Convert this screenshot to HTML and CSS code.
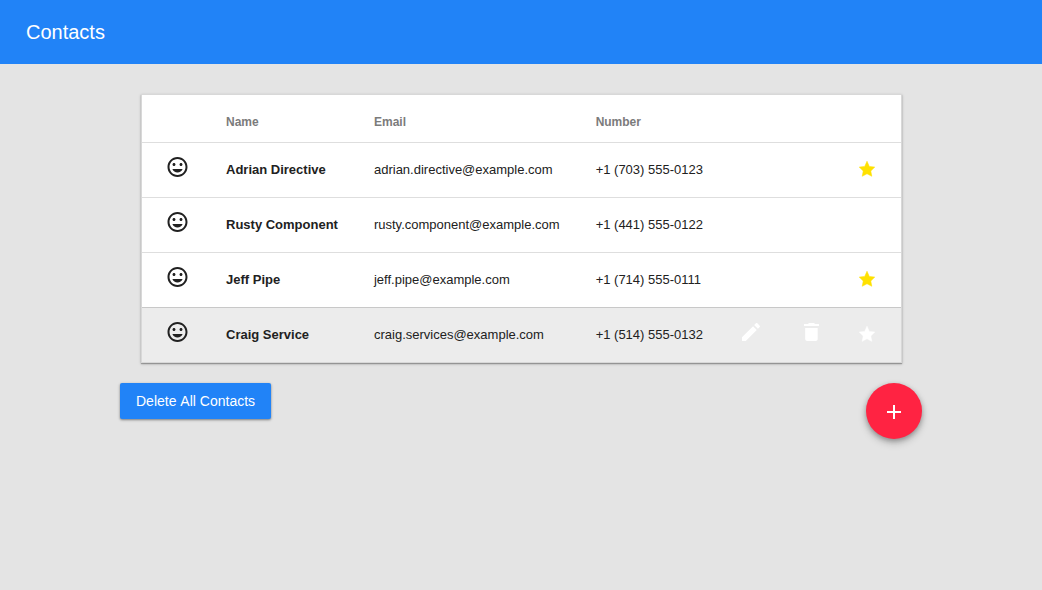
FILE: index.html
```html
<!DOCTYPE html>
<html lang="en">
<head>
<meta charset="utf-8">
<meta name="viewport" content="width=device-width, initial-scale=1">
<title>Contacts</title>
<link rel="stylesheet" href="styles.css">
</head>
<body>
<svg class="sprite" aria-hidden="true">
  <symbol id="mood" viewBox="0 0 24 24"><path d="M12.490 2C6.970 2 2.500 6.480 2.500 12s4.470 10 9.990 10C18.020 22 22.500 17.520 22.500 12S18.020 2 12.490 2zM12.500 20c-4.420 0-8-3.580-8-8s3.580-8 8-8 8 3.580 8 8-3.580 8-8 8zm3.500-9c.83 0 1.500-.67 1.500-1.500S16.830 8 16 8 14.500 8.670 14.500 9.500s.67 1.500 1.500 1.500zm-7 0c.83 0 1.500-.67 1.500-1.500S9.830 8 9 8 7.500 8.670 7.500 9.500 8.170 11 9 11zm3.500 6.500c2.330 0 4.310-1.460 5.110-3.500H7.390c.8 2.040 2.780 3.500 5.110 3.500z"/></symbol>
  <symbol id="edit" viewBox="0 0 24 24"><path d="M3 17.25V21h3.75L17.81 9.94l-3.75-3.75L3 17.25zM20.71 7.04c.39-.39.39-1.02 0-1.41l-2.34-2.34c-.39-.39-1.02-.39-1.41 0l-1.83 1.83 3.75 3.75 1.83-1.83z"/></symbol>
  <symbol id="delete" viewBox="0 0 24 24"><path d="M6.200 19c0 1.100.9 2 2 2h8.500c1.100 0 2-.9 2-2V8H6.200v11zM20 4h-4l-1-1h-5l-1 1H5v2h15V4z"/></symbol>
  <symbol id="star" viewBox="0 0 20 20"><path d="M10 2.200L12.300 7.400L17.800 8.100L13.800 12L14.800 17.300L10 14.800L5.200 17.300L6.200 12L2.200 8.100L7.700 7.400Z" stroke="currentColor" stroke-width="0.5" stroke-linejoin="round"/></symbol>
  <symbol id="add" viewBox="0 0 24 24"><path d="M19 13h-6v6h-2v-6H5v-2h6V5h2v6h6v2z"/></symbol>
</svg>
<header class="toolbar"><h1 class="toolbar-title">Contacts</h1></header>
<main class="content">
  <section class="card">
    <table class="contacts">
      <thead>
        <tr><td></td><th scope="col">Name</th><th scope="col">Email</th><th scope="col">Number</th><td></td><td></td><td></td></tr>
      </thead>
      <tbody>
        <tr>
          <td class="avatar"><svg class="icon"><use href="#mood"/></svg></td>
          <td class="name">Adrian Directive</td><td>adrian.directive@example.com</td><td>+1 (703) 555-0123</td>
          <td class="action"></td><td class="action"></td>
          <td class="favorite"><button class="icon-button starred" aria-label="Remove Adrian Directive from favorites"><svg class="star"><use href="#star"/></svg></button></td>
        </tr>
        <tr>
          <td class="avatar"><svg class="icon"><use href="#mood"/></svg></td>
          <td class="name">Rusty Component</td><td>rusty.component@example.com</td><td>+1 (441) 555-0122</td>
          <td class="action"></td><td class="action"></td><td class="favorite"></td>
        </tr>
        <tr>
          <td class="avatar"><svg class="icon"><use href="#mood"/></svg></td>
          <td class="name">Jeff Pipe</td><td>jeff.pipe@example.com</td><td>+1 (714) 555-0111</td>
          <td class="action"></td><td class="action"></td>
          <td class="favorite"><button class="icon-button starred" aria-label="Remove Jeff Pipe from favorites"><svg class="star"><use href="#star"/></svg></button></td>
        </tr>
        <tr class="active">
          <td class="avatar"><svg class="icon"><use href="#mood"/></svg></td>
          <td class="name">Craig Service</td><td>craig.services@example.com</td><td>+1 (514) 555-0132</td>
          <td class="action"><button class="icon-button" aria-label="Edit Craig Service"><svg class="icon"><use href="#edit"/></svg></button></td>
          <td class="action"><button class="icon-button" aria-label="Delete Craig Service"><svg class="icon"><use href="#delete"/></svg></button></td>
          <td class="favorite"><button class="icon-button" aria-label="Add Craig Service to favorites"><svg class="star"><use href="#star"/></svg></button></td>
        </tr>
      </tbody>
    </table>
  </section>
  <div class="footer-actions">
    <button class="raised-button">Delete All Contacts</button>
    <button class="fab" aria-label="Add contact"><svg class="icon"><use href="#add"/></svg></button>
  </div>
</main>
</body>
</html>
```
FILE: styles.css
```css
* {
  box-sizing: border-box;
}

body {
  margin: 0;
  background: #e4e4e4;
  color: #212121;
  font-family: "Liberation Sans", Arial, sans-serif;
  font-size: 13px;
}

button {
  border: 0;
  font: inherit;
  cursor: pointer;
}

.sprite {
  display: none;
}

.toolbar {
  display: flex;
  align-items: center;
  height: 64px;
  padding: 0 26px;
  background: #2183f7;
  color: #fff;
}

.toolbar-title {
  margin: 0;
  font-size: 20px;
  font-weight: 400;
}

.content {
  padding: 30px 120px;
}

.card {
  margin: 0 20px 20px 21px;
  border: 1px solid #d8d8d8;
  background: #fff;
  box-shadow: 0 1px 1px 0 rgba(0, 0, 0, 0.26), 0 1px 3px 0 rgba(0, 0, 0, 0.2);
}

.contacts {
  width: 100%;
  border-collapse: separate;
  border-spacing: 0;
  white-space: nowrap;
}

.contacts th,
.contacts td {
  padding: 0 18px;
  text-align: left;
  vertical-align: middle;
}

.contacts th {
  height: 47px;
  padding-top: 6px;
  color: #7b7b7b;
  font-size: 12px;
}

.contacts tbody td {
  height: 55px;
  padding-bottom: 2px;
  border-top: 1px solid #dedede;
}

.contacts .active td {
  border-top-color: #c8c8c8;
  background: #ececec;
}

.contacts tbody .avatar {
  width: 66px;
  padding: 0 19px 6px 23px;
}

.contacts tbody .action {
  width: 60px;
  padding-bottom: 6px;
}

.contacts tbody .favorite {
  width: 60px;
  padding: 0 24px 2px 16px;
}

.name {
  font-weight: 700;
}

.icon {
  display: block;
  width: 24px;
  height: 24px;
  fill: currentColor;
}

.star {
  display: block;
  width: 20px;
  height: 20px;
  fill: currentColor;
}

.icon-button {
  display: block;
  padding: 0;
  background: none;
  color: #fff;
}

.starred {
  color: #ffe100;
}

.footer-actions {
  display: flex;
  align-items: flex-start;
  justify-content: space-between;
}

.raised-button {
  height: 36px;
  padding: 0 16px;
  border-radius: 2px;
  background: #2183f7;
  box-shadow: 0 1px 3px rgba(0, 0, 0, 0.3), 0 1px 2px rgba(0, 0, 0, 0.2);
  color: #fff;
  font-size: 14px;
  font-kerning: none;
}

.fab {
  display: grid;
  place-items: center;
  width: 56px;
  height: 56px;
  padding: 2px 0 0;
  border-radius: 50%;
  background: #ff2342;
  box-shadow: 0 2px 5px rgba(0, 0, 0, 0.26), 0 4px 8px rgba(0, 0, 0, 0.2);
  color: #fff;
}
```
